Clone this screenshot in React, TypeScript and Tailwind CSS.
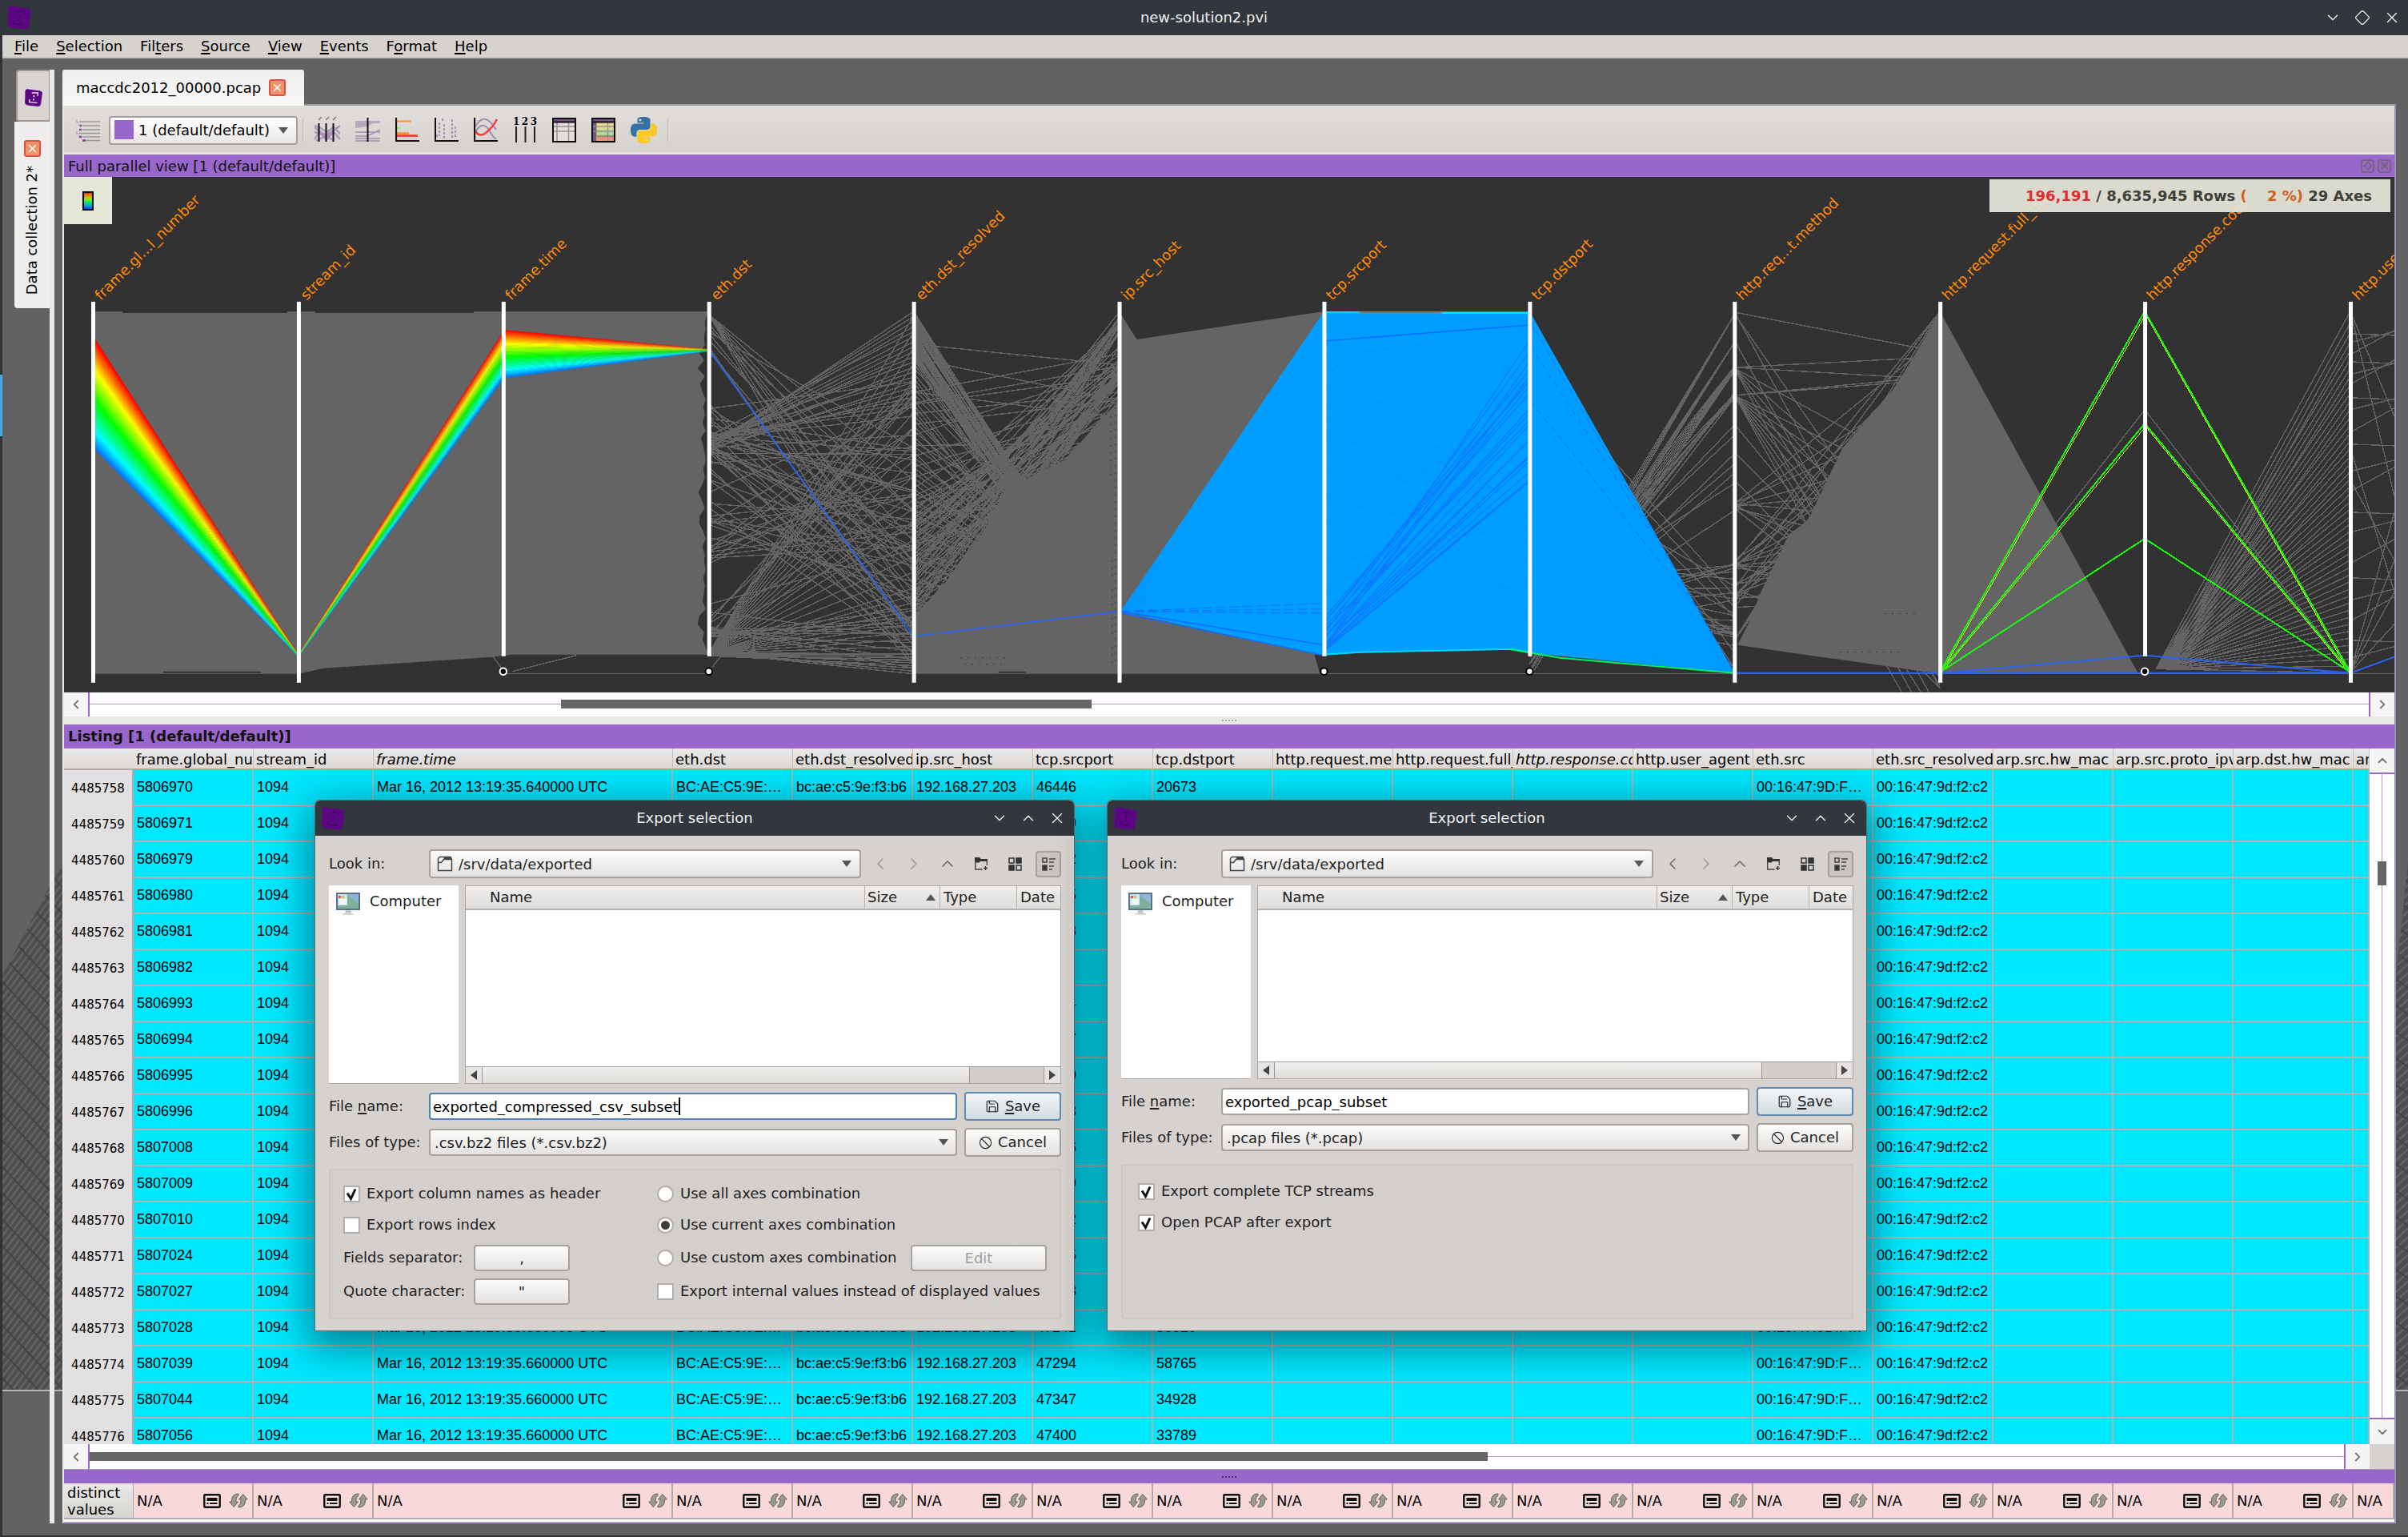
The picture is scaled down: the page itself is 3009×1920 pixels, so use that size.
import React from "react";
import { ChevronDown, ChevronLeft, ChevronRight, ChevronUp, Diamond, X, Save as SaveIcon, Ban } from "lucide-react";

/* ------------------------------------------------------------------ */
/* Shared pieces                                                       */
/* ------------------------------------------------------------------ */

function Logo({ className, mark = "#b98ad0" }: { className: string; mark?: string }) {
  return (
    <svg viewBox="0 0 32 32" className={className} aria-hidden="true">
      <path d="M5 1.500 L27 4.500 Q31 5.500 30.500 9 L28 27 Q27 31 23 30.500 L6 28.500 Q1.500 28 1.500 24 L2 5 Q2.500 1.500 5 1.500Z" fill="#5d0683" />
      <g fill="none" stroke={mark} strokeWidth="2">
        <path d="M13 8h10v5M23 8l-1.500 0" />
        <path d="M9 19v4.500l13 1" />
        <path d="M16.500 12v3M16 17.500v3" />
      </g>
    </svg>
  );
}

function CloseBadge({ label }: { label: string }) {
  return (
    <button aria-label={label} className="flex size-[21px] items-center justify-center rounded-[3px] border-2 border-[#dd4f4a] bg-[#ee9468] text-white">
      <X size={15} strokeWidth={2.500} />
    </button>
  );
}

/* ------------------------------------------------------------------ */
/* Menu                                                                */
/* ------------------------------------------------------------------ */

const menu: [string, string, string][] = [
  ["", "F", "ile"],
  ["", "S", "election"],
  ["Fil", "t", "ers"],
  ["", "S", "ource"],
  ["", "V", "iew"],
  ["", "E", "vents"],
  ["F", "o", "rmat"],
  ["", "H", "elp"],
];

function TitleBar() {
  return (
    <header className="grid h-11 shrink-0 grid-cols-[1fr_auto_1fr] items-center bg-[#32373e] text-[#eff0f1]">
      <Logo className="ml-2 size-8" mark="#46086a" />
      <h1 className="text-[18px] leading-6">new-solution2.pvi</h1>
      <div className="flex justify-end gap-4 pr-[9px]">
        <button aria-label="Minimize"><ChevronDown size={22} strokeWidth={1.500} /></button>
        <button aria-label="Restore"><Diamond size={20} strokeWidth={1.500} /></button>
        <button aria-label="Close"><X size={22} strokeWidth={1.500} /></button>
      </div>
    </header>
  );
}

function MenuBar() {
  return (
    <nav className="flex h-[29px] shrink-0 items-center border-b-2 border-[#c6c3bf] bg-[#d6d3cf] pl-1 text-black">
      {menu.map(([a, b, c]) => (
        <button key={a + b + c} className="px-[11px] leading-6">
          {a}
          <span className="underline decoration-2 underline-offset-2">{b}</span>
          {c}
        </button>
      ))}
    </nav>
  );
}

/* ------------------------------------------------------------------ */
/* Toolbar icons                                                       */
/* ------------------------------------------------------------------ */

function TreeIcon() {
  return (
    <svg width="30" height="28" viewBox="0 0 30 28">
      <path d="M4 3H30M8 8H30M8 13H30M4 17.500H30M8 22H30M12 26.500H30" stroke="#99989a" strokeWidth="1.500" />
      <path d="M1 1v3h2M4 6v2h2M1 15v3h2M4 20v2h2" stroke="#a898b0" strokeWidth="1.200" fill="none" />
      <path d="M4 13h3M8 26.500h4M4 22h3M5 8h2" stroke="#8b3f9a" strokeWidth="2.500" />
    </svg>
  );
}

function ParallelIcon() {
  return (
    <svg width="32" height="33" viewBox="0 0 32 33">
      <g stroke="#a689b4" fill="none" strokeWidth="2.500" opacity=".8">
        <path d="M0 11l6 2 9 6 9-6 8 8M0 28l6-9 9 9 9-9 8 9M0 19l14 3 10-5 8-6M0 13l15 12 9-5M2 30l12-6 10 5" />
      </g>
      <path d="M6 20h18l-9 10z" fill="#a689b4" opacity=".7" />
      <path d="M5.500 8v23M14.500 8v23M23.500 8v23" stroke="#111" strokeWidth="2" />
      <path d="M5 4l4-4M14 4l4-4M23 4l4-4" stroke="#777" strokeWidth="1.500" />
    </svg>
  );
}

function ZoomedIcon() {
  return (
    <svg width="31" height="33" viewBox="0 0 31 33">
      <path d="M0 5h31v3H22L15 12 0 14z" fill="#b09bbb" opacity=".8" />
      <path d="M0 19h31M0 24h15l16-8M0 27h31M0 30h31" stroke="#a790b3" strokeWidth="1.600" fill="none" />
      <path d="M15.500 1v30" stroke="#111" strokeWidth="2" />
    </svg>
  );
}

function HistogramIcon() {
  return (
    <svg width="30" height="33" viewBox="0 0 30 33">
      <path d="M2 5.500h18" stroke="#ff9020" strokeWidth="2" />
      <path d="M1 5v8h6l-3 2H1v5" fill="#7dff2a" />
      <path d="M2 20.500h15" stroke="#ff9020" strokeWidth="2.500" />
      <path d="M2 23.500h26" stroke="#ff2a2a" strokeWidth="2.500" />
      <path d="M1 1v29h29" fill="none" stroke="#111" strokeWidth="2.200" />
    </svg>
  );
}

function ScatterIcon() {
  return (
    <svg width="30" height="33" viewBox="0 0 30 33">
      <g stroke="#a48bb2" strokeWidth="1.800" fill="none" strokeDasharray="3 2">
        <path d="M3 22v5M6 7v17M12 9v18M22 3v24M26 12v15M10 2v3" />
      </g>
      <path d="M1 1v29h29" fill="none" stroke="#111" strokeWidth="2" />
    </svg>
  );
}

function SeriesIcon() {
  return (
    <svg width="30" height="33" viewBox="0 0 30 33">
      <g fill="none" strokeWidth="2">
        <path d="M2 12C10-2 18 0 28 16" stroke="#a689b4" />
        <path d="M2 20C8 6 16 10 20 18s6 9 8 9" stroke="#a689b4" />
        <path d="M2 18c3 5 8 6 13 2S25 11 29 3" stroke="#fb3b3b" strokeWidth="2.500" />
        <path d="M1 1v29h29" stroke="#111" strokeWidth="2.200" />
      </g>
    </svg>
  );
}

function AxesIcon() {
  return (
    <span className="flex w-[30px] flex-col">
      <span className="flex justify-between font-['DejaVu_Serif'] text-[12px] leading-[11px] font-bold text-black">
        <span>1</span><span>2</span><span>3</span>
      </span>
      <svg width="30" height="20" viewBox="0 0 30 20">
        <path d="M4 0v20M15.500 0v20M27 0v20" stroke="#222" strokeWidth="2" />
      </svg>
    </span>
  );
}

function GridIcon({ colored }: { colored?: boolean }) {
  return (
    <svg width="30" height="31" viewBox="0 0 30 31">
      <path d="M1 1h28v29H1z" fill="#e2dfde" />
      {colored && (
        <>
          <path d="M5 5h24v10H5z" fill="#e3d694" />
          <path d="M5 15h24v8H5z" fill="#aedb93" />
          <path d="M5 23h24v7H5z" fill="#e89080" />
          <path d="M1 1h4v29H1z" fill="#7d5290" />
        </>
      )}
      <path d="M1 1h28v4H1z" fill="#7d5290" />
      <path d="M6 5v25M20.500 5v25M1 11h28M1 17h28" stroke="#98938f" strokeWidth="1.500" />
      {colored && <path d="M1 23h28M5.500 5v25" stroke="#6b6566" strokeWidth="1" />}
      <path d="M1 5.500h28M1 1h28v29H1z" fill="none" stroke="#0d0d0d" strokeWidth="2" />
    </svg>
  );
}

function PythonIcon() {
  return (
    <svg width="33" height="33" viewBox="0 0 24 24">
      <path fill="#3673a5" d="M14.250.18l.9.2.73.26.59.3.45.32.34.34.25.34.16.33.1.3.04.26.02.2-.01.13V8.500l-.05.63-.13.55-.21.46-.26.38-.3.31-.33.25-.35.19-.35.14-.33.1-.3.07-.26.04-.21.02H8.770l-.69.05-.59.14-.5.22-.41.27-.33.32-.27.35-.2.36-.15.37-.1.35-.07.32-.04.27-.02.21v3.060H3.170l-.21-.03-.28-.07-.32-.12-.35-.18-.36-.26-.36-.36-.35-.46-.32-.59-.28-.73-.21-.88-.14-1.050-.05-1.230.06-1.220.16-1.040.24-.87.32-.71.36-.57.4-.44.42-.33.42-.24.4-.16.36-.1.32-.05.24-.01h.16l.06.01h8.160v-.83H6.180l-.01-2.750-.02-.37.05-.34.11-.31.17-.28.25-.26.31-.23.38-.2.44-.18.51-.15.58-.12.64-.1.71-.06.77-.04.84-.02 1.270.05zm-6.300 1.980l-.23.33-.08.41.08.41.23.34.33.22.41.09.41-.09.33-.22.23-.34.08-.41-.08-.41-.23-.33-.33-.22-.41-.09-.41.09z" />
      <path fill="#fbc926" d="M21.040 6.110l.28.06.32.12.35.18.36.27.36.35.35.47.32.59.28.73.21.88.14 1.040.05 1.230-.06 1.230-.16 1.040-.24.86-.32.71-.36.57-.4.45-.42.33-.42.24-.4.16-.36.09-.32.05-.24.02-.16-.01h-8.220v.82h5.840l.01 2.760.02.36-.05.34-.11.31-.17.29-.25.25-.31.24-.38.2-.44.17-.51.15-.58.13-.64.09-.71.07-.77.04-.84.01-1.270-.04-1.070-.14-.9-.2-.73-.25-.59-.3-.45-.33-.34-.34-.25-.34-.16-.33-.1-.3-.04-.25-.02-.2.01-.13v-5.340l.05-.64.13-.54.21-.46.26-.38.3-.32.33-.24.35-.2.35-.14.33-.1.3-.06.26-.04.21-.02.13-.01h5.840l.69-.05.59-.14.5-.21.41-.28.33-.32.27-.35.2-.36.15-.36.1-.35.07-.32.04-.28.02-.21V6.070h2.090l.14.01zm-6.470 14.250l-.23.33-.08.41.08.41.23.33.33.23.41.08.41-.08.33-.23.23-.33.08-.41-.08-.41-.23-.33-.33-.23-.41-.08-.41.08z" />
    </svg>
  );
}

const tools: [string, React.ReactNode][] = [
  ["Parallel view", <ParallelIcon />],
  ["Zoomed parallel view", <ZoomedIcon />],
  ["Histogram view", <HistogramIcon />],
  ["Scatter view", <ScatterIcon />],
  ["Series view", <SeriesIcon />],
  ["Axes combination", <AxesIcon />],
  ["Listing", <GridIcon />],
  ["Layered listing", <GridIcon colored />],
  ["Python console", <PythonIcon />],
];

function Toolbar() {
  return (
    <div className="flex h-[61px] shrink-0 items-center border-b-[3px] border-[#e9e6e8] bg-linear-to-b from-[#e1dedc] to-[#d5d2ce] pt-[3px] pl-[15px]">
      <button aria-label="Layers tree"><TreeIcon /></button>
      <label className="relative ml-[11px] block">
        <span className="pointer-events-none absolute top-[5px] left-[7px] size-6 bg-[#9966cc]" />
        <select aria-label="Layer" className="h-9 w-[236px] appearance-none rounded-[4px] border-2 border-[#a5a19e] bg-linear-to-b from-white to-[#e9e7e5] pl-[35px] text-black">
          <option>1 (default/default)</option>
        </select>
        <span className="pointer-events-none absolute top-[14px] right-[12px] border-x-[6px] border-t-[8px] border-x-transparent border-t-[#555]" />
      </label>
      <span className="ml-[6px] h-7 w-px bg-[#bfbbb8]" />
      <div className="ml-[14px] flex items-center gap-[19px]">
        {tools.map(([name, icon]) => (
          <button key={name} aria-label={name}>{icon}</button>
        ))}
      </div>
      <span className="ml-[13px] h-7 w-px bg-[#bfbbb8]" />
    </div>
  );
}

/* ------------------------------------------------------------------ */
/* Parallel coordinates view                                           */
/* ------------------------------------------------------------------ */

const TOP = 389;
const FLOOR = 842;
const axes = [
  "frame.gl...l_number",
  "stream_id",
  "frame.time",
  "eth.dst",
  "eth.dst_resolved",
  "ip.src_host",
  "tcp.srcport",
  "tcp.dstport",
  "http.req...t.method",
  "http.request.full_uri",
  "http.response.code",
  "http.user_agent",
].map((name, i) => ({ name, x: Math.round(116 + 256.500 * i), short: [2, 3, 6, 7, 10].includes(i) }));
const ax = (i: number) => axes[i].x;

function makeRandom(seed: number) {
  let s = seed;
  return () => {
    s = (s * 1664525 + 1013904223) % 4294967296;
    return s / 4294967296;
  };
}
const rnd = makeRandom(20120316);
const span = (a: number, b: number) => a + (b - a) * rnd();

type Pair = [number, number];
const strokes = (i: number, pairs: Pair[]) =>
  pairs.map(([a, b]) => `M${ax(i)} ${a.toFixed(1)}L${ax(i + 1)} ${b.toFixed(1)}`).join("");
const many = (n: number, f: (k: number) => Pair): Pair[] => Array.from({ length: n }, (_, k) => f(k / (n - 1)));

const greyEthDst = strokes(3, [
  ...many(20, (t) => [555 + span(-12, 8), TOP + t * 120]),
  ...many(14, (t) => [555 + span(-8, 12), 520 + t * 310]),
  ...many(7, (t) => [TOP + 4, 600 + t * 230]),
  ...many(5, (t) => [span(404, 440), span(700, 830)]),
  ...many(18, (t) => [816, 395 + t * 340]),
  ...many(12, (t) => [816, 735 + t * 100]),
  ...many(8, (t) => [790 + span(-8, 8), 760 + t * 75]),
  ...many(52, () => [span(500, 800), span(470, 830)]),
  ...many(8, (t) => [span(815, 820), 818 + t * 24]),
  [415, 560],
  [411, 640],
]);

const greyEthResolved = strokes(4, [
  ...many(46, (t) => [TOP + t * 60, 800 + span(-20, 42)]),
  ...many(56, (t) => [440 + t * 360, 740 + span(-40, 100)]),
  ...many(50, (t) => [640 + t * 200, TOP + span(0, 90)]),
  ...many(44, (t) => [620 + t * 220, span(450, 640)]),
  ...many(10, (t) => [490 + t * 120, span(440, 580)]),
  [430, 456],
  [448, 500],
  [490, 442],
  [505, 470],
]);

const greyMethodLeft = strokes(7, [
  ...many(4, (t) => [812 + t * 26, TOP + 4]),
  ...many(4, (t) => [812 + t * 26, 428]),
  ...many(7, (t) => [780 + t * 60, 458 + t * 6]),
  ...many(9, (t) => [760 + t * 70, 494 + span(-4, 4)]),
  ...many(7, () => [span(740, 830), span(530, 640)]),
  ...many(9, () => [span(440, 640), span(720, 838)]),
  ...many(22, () => [span(690, 800), span(700, 810)]),
]);

const greyMethodRight = strokes(8, [
  [TOP + 1, 440],
  [TOP + 1, 860],
  [TOP + 3, 760],
  [425, 890],
  [459, 446],
  [459, 474],
  [494, 474],
  [494, 470],
  ...many(5, (t) => [460, 600 + t * 330]),
  ...many(8, (t) => [494, 620 + t * 330]),
  [530, 840],
  [565, 820],
  [600, 860],
  ...many(10, (t) => [632 + span(-3, 3), 420 + t * 420]),
  ...many(12, (t) => [705 + span(-6, 6), TOP + t * 400]),
  ...many(14, (t) => [740 + span(-12, 20), TOP + t * 420]),
  ...many(10, (t) => [800, TOP + t * 60]),
]);

const greyAgentLeft = many(48, (t) => [0, TOP + Math.pow(t, 0.900) * 452] as Pair)
  .map(([, b], k) => `M${ax(10) + 14 + (k % 4) * 4} ${FLOOR - 6}L${ax(11)} ${b.toFixed(1)}`)
  .join("");

const greyAgentRight = [417, 428, 443, 452, 468, 480, 497, 512, 540, 555, 589, 614, 640, 665, 704, 722, 750, 776, 800, 822]
  .map((y, k) => `M${ax(11)} ${y}L2993 ${y + (k % 3 === 0 ? 2 : k % 3 === 1 ? -14 : -30)}`)
  .concat([`M${ax(11)} ${TOP}L2993 520M${ax(11)} ${TOP}L2993 620M${ax(11)} 560L2993 740M${ax(11)} 600L2993 700M${ax(11)} 840L2993 640M${ax(11)} 840L2993 700M${ax(11)} 840L2993 740M${ax(11)} 840L2993 780`])
  .join("");

const blueBundle = many(22, (t) => [814 - span(0, 60) * (1 - t), 430 + t * 175 + span(-8, 8)]);
const blueShade = many(60, () => [span(400, 810), span(400, 808)]);

function Fan({ ax0, a, b, ax1, c, d }: { ax0: number; a: number; b: number; ax1: number; c: number; d: number }) {
  const n = 44;
  return (
    <g>
      {Array.from({ length: n }, (_, k) => {
        const at = (lo: number, hi: number, t: number) => (lo + (hi - lo) * t).toFixed(1);
        const t0 = k / n;
        const t1 = (k + 1.300) / n;
        return (
          <path
            key={k}
            fill={`hsl(${Math.round(t0 * 216)} 100% 50%)`}
            d={`M${ax0} ${at(a, b, t0)}L${ax1} ${at(c, d, t0)}V${at(c, d, t1)}L${ax0} ${at(a, b, t1)}Z`}
          />
        );
      })}
    </g>
  );
}

const teeth = [0, 3, 2, 4, 3, 10, 4, 12, 3, 9, 6, 2, 5, 3, 6, 2, 8, 5, 3, 2, 5, 3, 6, 11, 7, 3, 9, 10, 5, 2, 6, 3, 4, 2, 5, 3, 4, 6, 2, 10, 12, 4, 6, 2];
const jag = teeth.map((w, k) => `L${884 - w} ${Math.round(392 + k * 9.700)}`).join("");

function ParallelPlot() {
  const grey = "#646464";
  return (
    <svg viewBox="80 221 2913 644" className="block w-full" role="img" aria-label="Parallel coordinates">
      <rect x="80" y="221" width="2913" height="644" fill="#323232" />

      {/* unselected events */}
      <g fill={grey}>
        <path d={`M117 ${TOP}H886V818H640L615 821 525 827 405 835 373 ${FLOOR}H117Z`} />
        <path d={`M1142 ${FLOOR}V770L1190 720 1235 655 1262 598 1276 602 1330 575 1399 500V${FLOOR}Z`} />
        <path d={`M1399 ${TOP}L1421 424 1500 412 1655 ${TOP}V818H1643L1650 ${FLOOR}H1399Z`} />
        <path d={`M2425 ${TOP}L2673 ${FLOOR}H2425L2172 806 2190 770 2200 742 2236 668 2260 650 2303 560 2372 480Z`} />
      </g>
      <path d={`M886 390${jag}L886 818Z`} fill="#323232" />
      <g fill="none" stroke={grey} strokeWidth="1.400" shapeRendering="crispEdges">
        <path d={greyEthDst} />
        <path d={greyEthResolved} />
        <path d={greyMethodLeft} />
        <path d={greyMethodRight} />
        <path d={greyAgentLeft} />
        <path d={greyAgentRight} />
        <path d={`M616 820L629 838M720 819L640 839M630 ${FLOOR}H886M890 834L902 819M1650 ${FLOOR}H2425M2681 ${FLOOR}H2993M1917 838L1930 818M2673 ${FLOOR}H2690`} />
        <path d="M2425 840L2681 512 2938 840" />
      </g>
      <g fill="#323232">
        <path d="M153 389h206v2H153zM394 389h198v2H394zM204 839h122v2H204zM1248 839h34v2h-34z" />
      </g>
      <g stroke="#3a3a3a" strokeWidth="1" fill="none" strokeDasharray="2 7" shapeRendering="crispEdges">
        <path d="M1146 660V740M1152 670V752M1160 680V720M1170 650V740M1182 640V712M1196 660V700M1210 640V690M1226 610V660" />
        <path d="M1394 500V830M1388 520V600M1390 700V830M1200 822h60M1205 830h50" />
        <path d="M2356 767h40M2300 815h80" />
      </g>

      {/* time-ordered gradient */}
      <Fan ax0={118} a={422} b={560} ax1={373} c={818} d={821} />
      <Fan ax0={373} a={818} b={821} ax1={630} c={412} d={472} />
      <Fan ax0={630} a={412} b={472} ax1={886} c={436} d={439} />

      {/* selected ports */}
      <g fill="#009fff">
        <path d="M1401 764L1655 389V819Z" />
        <path d="M1655 389H1912V815L1890 811 1690 816 1655 819Z" />
        <path d="M1912 389L2168 841 1912 816Z" />
      </g>
      <g fill="none" stroke="#0098ff" strokeWidth="1">
        <path d={strokes(6, blueShade)} />
        <path d={`${many(30, (t) => [0, 400 + t * 410]).map(([, y]) => `M1401 764L1655 ${y}`).join("")}${many(24, (t) => [0, 400 + t * 410]).map(([, y]) => `M1912 ${y}L2168 841`).join("")}`} />
      </g>
      <g fill="none" stroke="#0f6cff" strokeWidth="1">
        <path d={strokes(6, blueBundle)} strokeWidth="1.300" opacity=".7" />
        <path d="M1655 426L1912 406" strokeWidth="1.500" />
        <path d="M1401 764L1655 754M1401 764L1655 761M1401 764L1655 766" strokeDasharray="12 5" />
        <path d="M1401 764L1655 806M1401 766L1655 819" strokeWidth="1.500" />
        <path d="M1912 400L2168 840M1912 500L2130 770M1912 430L2060 660" strokeDasharray="8 6" />
        <path d="M886 437L1142 795 1399 764" stroke="#2a62f0" strokeWidth="1.800" />
        <path d="M2168 841H2938M2425 841L2681 819 2938 841 2993 821" stroke="#2a62f0" strokeWidth="2" />
      </g>
      <g fill="none" strokeWidth="2">
        <path d="M1655 390H1700M1802 391H1912" stroke="#00e0ff" />
        <path d="M1700 391H1802" stroke="#5b8fa0" />
        <path d="M1655 818L1700 815 1890 811 1912 815" stroke="#00d8ff" />
        <path d="M1885 811L1950 822 2168 841" stroke="#00f060" />
      </g>
      <g fill="none" stroke="#e0f020" strokeWidth="1" shapeRendering="crispEdges">
        <path d="M2427 840L2682 393 2936 840M2427 840L2682 533 2936 840" />
      </g>
      <g fill="none" stroke="#18f80c" strokeWidth="2" shapeRendering="crispEdges">
        <path d="M2425 840L2681 389 2938 840M2425 840L2681 529 2938 840M2425 840L2681 673 2938 840" />
      </g>

      {/* axes */}
      <g fill="#fff">
        {axes.map((a) => (
          <rect key={a.name} x={a.x - 2} y="377" width="5" height={a.short ? 443 : 476} />
        ))}
      </g>
      {axes.filter((a) => a.short).map((a) => (
        <circle key={a.name} cx={a.x} cy="839" r="4.200" fill={[2, 10].includes(axes.indexOf(a)) ? "#000" : "#fff"} stroke={[2, 10].includes(axes.indexOf(a)) ? "#fff" : "#000"} strokeWidth="2" />
      ))}
      <g fill="#ff8a0d" fontSize="18" fontFamily="DejaVu Sans, sans-serif">
        {axes.map((a) => (
          <text key={a.name} transform={`translate(${a.x + 10} 376) rotate(-45)`}>{a.name}</text>
        ))}
      </g>
    </svg>
  );
}

function PanelTitle({ children, className }: { children: React.ReactNode; className: string }) {
  return <div className={"flex shrink-0 items-center bg-[#9966cc] pl-[5px] text-[#111] " + className}>{children}</div>;
}

function ParallelView() {
  return (
    <section>
      <PanelTitle className="h-7 justify-between pr-1">
        <h2>Full parallel view [1 (default/default)]</h2>
        <span className="flex gap-1 text-[#74667e]">
          <button aria-label="Float" className="flex size-[17px] items-center justify-center rounded-[4px] border-2"><Diamond size={10} strokeWidth={4} /></button>
          <button aria-label="Close view" className="flex size-[17px] items-center justify-center rounded-[4px] border-2"><X size={14} strokeWidth={5} /></button>
        </span>
      </PanelTitle>
      <div className="relative">
        <ParallelPlot />
        <button aria-label="Colors" className="absolute top-0 left-0 flex h-[59px] w-[60px] items-center justify-center bg-[#e4e6d8]">
          <span className="h-6 w-[14px] border-2 border-black bg-linear-to-b from-[#ff2000] via-[#20ff20] to-[#0040ff]" />
        </button>
        <p className="absolute top-[3px] right-[5px] flex h-[41px] w-[501px] items-center justify-end bg-[#e4e5d7]/95 pr-[23px] font-bold whitespace-pre text-[#40403a]">
          <span className="text-[#e02b30]">196,191</span> / 8,635,945 Rows <span className="text-[#d2601e]">{"(    2 %)"}</span> 29 Axes
        </p>
      </div>
      <HScroll left={589} thumb={663} className="h-[30px]" />
      <div className="flex h-[10px] items-center justify-center bg-[#e8e8e5] text-[#aaa]"><Dots /></div>
    </section>
  );
}

function Dots() {
  return (
    <span className="flex gap-[2px]">
      {[0, 1, 2, 3, 4].map((k) => <span key={k} className="size-[2px] bg-current" />)}
    </span>
  );
}

function HScroll({ left, thumb, className }: { left: number; thumb: number; className: string }) {
  return (
    <div className={"flex min-w-0 flex-1 bg-white text-[#777] " + className}>
      <button aria-label="Scroll left" className="flex w-8 items-center justify-center border-r-2 border-[#9966cc] bg-[#f6f5f6]"><ChevronLeft size={18} strokeWidth={2.500} /></button>
      <div className="flex flex-1 items-center">
        <span className="h-px bg-[#c08fc8]" style={{ width: left }} />
        <span className="h-[11px] bg-[#666]" style={{ width: thumb }} />
        <span className="h-px flex-1 bg-[#c08fc8]" />
      </div>
      <button aria-label="Scroll right" className="flex w-8 items-center justify-center border-l-2 border-[#9966cc] bg-[#f6f5f6]"><ChevronRight size={18} strokeWidth={2.500} /></button>
    </div>
  );
}

/* ------------------------------------------------------------------ */
/* Listing                                                             */
/* ------------------------------------------------------------------ */

const columns = [
  "frame.global_number", "stream_id", "frame.time", "eth.dst", "eth.dst_resolved", "ip.src_host", "tcp.srcport", "tcp.dstport",
  "http.request.method", "http.request.full_uri", "http.response.code", "http.user_agent", "eth.src", "eth.src_resolved",
  "arp.src.hw_mac", "arp.src.proto_ipv4", "arp.dst.hw_mac", "arp.dst.proto_ipv4",
];
const frames = [
  5806970, 5806971, 5806979, 5806980, 5806981, 5806982, 5806993, 5806994, 5806995, 5806996, 5807008, 5807009, 5807010,
  5807024, 5807027, 5807028, 5807039, 5807044, 5807056,
];
const dstPorts: Record<number, string> = { 0: "20673", 15: "35829", 16: "58765", 17: "34928", 18: "33789" };

function Columns() {
  return (
    <colgroup>
      <col className="w-[87px]" />
      {columns.map((c, i) => (
        <col key={c} className={i === 2 ? "w-[374px]" : i === 17 ? "" : "w-[150px]"} />
      ))}
    </colgroup>
  );
}

function Listing() {
  return (
    <section className="flex min-h-0 flex-1 flex-col">
      <PanelTitle className="h-[30px] pb-px font-bold"><h2>Listing [1 (default/default)]</h2></PanelTitle>
      <div className="flex min-h-0 flex-1">
        <div className="min-w-0 flex-1 overflow-hidden bg-[#e1dfe0]">
          <table className="w-full table-fixed border-separate border-spacing-0 text-left text-black">
            <Columns />
            <thead>
              <tr className="h-[27px] bg-linear-to-b from-[#ebe9e8] to-[#dbd8d5]">
                <td className="border-b-2 border-[#b8a9a4]" />
                {columns.map((c, i) => (
                  <th key={c} className={"overflow-hidden border-r border-b-2 border-r-[#c4c1be] border-b-[#c8988c] p-0 pt-[2px] pl-[3px] font-normal whitespace-nowrap leading-[23px]" + (["frame.time", "http.response.code"].includes(c) ? " italic" : "")}>{c}</th>
                ))}
              </tr>
            </thead>
            <tbody>
              {frames.map((f, r) => {
                const cells = [
                  String(f), "1094", `Mar 16, 2012 13:19:35.${r < 6 ? "640000" : "660000"} UTC`, "BC:AE:C5:9E:…", "bc:ae:c5:9e:f3:b6",
                  "192.168.27.203", String(46446 + 53 * r), dstPorts[r] ?? "", "", "", "", "", "00:16:47:9D:F…", "00:16:47:9d:f2:c2", "", "", "", "",
                ];
                return (
                  <tr key={f} className="h-[45px] font-['Liberation_Sans',Arial,sans-serif]">
                    <th className="border-r-2 border-[#b7a9a9] p-0 pt-[2px] text-center font-['DejaVu_Sans',sans-serif] text-[15px] leading-5 font-normal">{4485758 + r}</th>
                    {cells.map((v, i) => (
                      <td key={i} className="overflow-hidden border-r-2 border-b-2 border-r-[#a8b4b4] border-b-[#b3b3b3] bg-[#00e8ff] p-0 pl-1 whitespace-nowrap">{v}</td>
                    ))}
                  </tr>
                );
              })}
            </tbody>
          </table>
        </div>
        <div className="flex w-[31px] shrink-0 flex-col items-stretch bg-white text-[#777]">
          <button aria-label="Scroll up" className="flex h-8 items-center justify-center border-b-2 border-[#9966cc] bg-[#f6f5f6]"><ChevronUp size={18} strokeWidth={2.500} /></button>
          <div className="flex flex-1 flex-col items-center">
            <span className="h-[109px] w-px bg-[#c08fc8]" />
            <span className="h-[30px] w-[11px] bg-[#666]" />
            <span className="w-px flex-1 bg-[#c08fc8]" />
          </div>
          <button aria-label="Scroll down" className="flex h-[33px] items-center justify-center border-t-2 border-[#9966cc] bg-[#f6f5f6]"><ChevronDown size={18} strokeWidth={2.500} /></button>
        </div>
      </div>
      <div className="flex h-8 shrink-0 border-b border-[#a39aa6]">
        <HScroll left={0} thumb={1747} className="h-[31px]" />
        <span className="w-[31px] bg-[#d6d3d0]" />
      </div>
      <div className="flex h-[17px] shrink-0 items-center justify-center bg-[#9966cc] text-[#4a3068]">
        <Dots />
      </div>
      <table className="w-full shrink-0 table-fixed border-separate border-spacing-0 border-b-[3px] border-white text-left text-black">
        <Columns />
        <tbody>
          <tr className="h-[45px]">
            <th className="border-r border-b-2 border-[#aaa] bg-linear-to-b from-[#eceae8] to-[#d6d4d0] p-0 pl-1 leading-[21px] font-normal">distinct values</th>
            {columns.map((c, i) => (
              <td key={c} className="overflow-hidden border-r-2 border-b-2 border-[#b3aaaa] bg-[#f8d8d8] p-0">
                <div className={"flex items-center pl-1 " + (i === 17 ? "" : "pr-[5px]")}>
                  <span className="flex-1 leading-6">N/A</span>
                  {i < 17 && (
                    <>
                      <button aria-label={`List values of ${c}`} className="mr-[10px]">
                        <svg width="22" height="18" viewBox="0 0 22 18">
                          <rect x="1.300" y="1.300" width="19.400" height="15.400" rx="1" fill="#f8e4e4" stroke="#111" strokeWidth="2.400" />
                          <path d="M4.500 5h13v4h-13z" fill="#111" />
                          <path d="M4.500 12h2M8 12h9.500" stroke="#111" strokeWidth="2.200" />
                        </svg>
                      </button>
                      <button aria-label={`Refresh ${c}`}>
                        <svg width="24" height="19" viewBox="0 0 24 19">
                          <g fill="#9a9c92" stroke="#62635e" strokeWidth="1">
                            <path d="M12 1Q3 1 3.500 11H.8L6.300 17.500 11.500 11H8.800Q8.500 5 12 3Z" />
                            <path d="M12 18Q21 18 20.500 8h2.700L17.700 1.500 12.500 8h2.700Q15.500 14 12 16Z" />
                          </g>
                        </svg>
                      </button>
                    </>
                  )}
                </div>
              </td>
            ))}
          </tr>
        </tbody>
      </table>
    </section>
  );
}

/* ------------------------------------------------------------------ */
/* Export dialogs                                                      */
/* ------------------------------------------------------------------ */

const raised = "rounded-[4px] border-2 border-[#a5a19e] bg-linear-to-b from-[#fcfcfb] to-[#e4e2e0]";

function Arrow({ className }: { className: string }) {
  return <span className={"pointer-events-none absolute border-x-[6px] border-t-[8px] border-x-transparent border-t-[#555] " + className} />;
}

function Tick({ label, checked, kind = "checkbox", name }: { label: string; checked?: boolean; kind?: "checkbox" | "radio"; name?: string }) {
  return (
    <label className="flex items-center gap-2">
      <span className="relative block size-[21px]">
        <input
          type={kind}
          name={name}
          defaultChecked={checked}
          className={"peer block size-[21px] appearance-none border-2 border-[#b1adaa] bg-white " + (kind === "radio" ? "rounded-full" : "")}
        />
        {kind === "radio" ? (
          <span className="pointer-events-none absolute inset-[5px] hidden rounded-full bg-[#3c3c3c] peer-checked:block" />
        ) : (
          <svg viewBox="0 0 21 21" className="pointer-events-none absolute inset-0 hidden peer-checked:block">
            <path d="M5 9.500L9.500 16.500 15 4.500" fill="none" stroke="#111" strokeWidth="3" />
          </svg>
        )}
      </span>
      <span className="leading-6 whitespace-nowrap">{label}</span>
    </label>
  );
}

function FolderIcon() {
  return (
    <svg width="20" height="20" viewBox="0 0 20 20" className="pointer-events-none absolute top-[8px] left-[10px]">
      <path d="M1.500 18.500V3.500L3.500 1.500H17L18.500 4.500V18.500Z" fill="none" stroke="#444" strokeWidth="1.500" />
      <path d="M1.500 8.500H5.500L8.500 4.500H18.500" fill="none" stroke="#444" strokeWidth="1.500" />
      <path d="M9 1.500H17.500V4.500H8.500Z" fill="#444" />
    </svg>
  );
}

function ComputerIcon() {
  return (
    <svg width="32" height="30" viewBox="0 0 32 30">
      <rect x="1" y="1" width="30" height="22" fill="#59718a" />
      <path d="M3 3h26v18H3z" fill="#7fae9a" />
      <path d="M14 3h15v12z" fill="#8fb5d8" />
      <path d="M3 3h12v14H3z" fill="#cfe4ee" />
      <path d="M5 9h9v7H5z" fill="#eef8f0" />
      <path d="M4 5h3v3H4z" fill="#e05050" />
      <path d="M8 5h3v3H8z" fill="#e0c040" />
      <path d="M13 23h6l1 4h-8z" fill="#c8c8c8" />
      <path d="M9 27h14v2H9z" fill="#d8d8d8" />
    </svg>
  );
}

function NavIcons({ canGoBack }: { canGoBack?: boolean }) {
  return (
    <div className="flex items-center gap-[10px] text-[#4a4a4a]">
      <button aria-label="Back" className={"flex size-8 items-center justify-center " + (canGoBack ? "text-[#666]" : "text-[#999694]")}><ChevronLeft size={24} strokeWidth={1.500} /></button>
      <button aria-label="Forward" className="flex size-8 items-center justify-center text-[#999694]"><ChevronRight size={24} strokeWidth={1.500} /></button>
      <button aria-label="Parent folder" className="flex size-8 items-center justify-center text-[#666]"><ChevronUp size={24} strokeWidth={1.500} /></button>
      <button aria-label="New folder" className="flex size-8 items-center justify-center">
        <svg width="18" height="18" viewBox="0 0 18 18">
          <path d="M1 1h6l1.500 2H17v3H8L6.500 7.500H1z" fill="#333" />
          <path d="M1.700 6v10h9M16.300 5v6" fill="none" stroke="#444" strokeWidth="1.400" />
          <path d="M14.500 12v5M12 14.500h5" stroke="#333" strokeWidth="1.500" />
        </svg>
      </button>
      <button aria-label="List view" className="flex size-8 items-center justify-center">
        <svg width="17" height="17" viewBox="0 0 17 17" stroke="#333" strokeWidth="1.500">
          <path d="M1 1h6v6H1zM10 10h6v6h-6z" fill="none" />
          <path d="M10 1h6v6h-6zM1 10h6v6H1z" fill="#333" />
        </svg>
      </button>
      <button aria-label="Detail view" className="flex h-[33px] w-8 items-center justify-center rounded-[4px] border-2 border-[#a3a09d] bg-[#c8c5c3]">
        <svg width="17" height="17" viewBox="0 0 17 17" stroke="#444" strokeWidth="1.500">
          <path d="M1 1h5v5H1z" fill="none" />
          <path d="M1 10h5v6H1z" fill="#333" />
          <path d="M9 2h8M9 6h6M9 11h6M9 15h4" />
        </svg>
      </button>
    </div>
  );
}

interface DialogProps {
  id: string;
  className: string;
  fileName: string;
  fileType: string;
  focused?: boolean;
  paneClass: string;
  children: React.ReactNode;
}

function ExportDialog({ id, className, fileName, fileType, focused, paneClass, children }: DialogProps) {
  return (
    <section
      role="dialog"
      aria-labelledby={`${id}-title`}
      className={"absolute top-[1000px] flex h-[662px] w-[948px] flex-col rounded-t-[6px] bg-[#d6d2d0] text-[#222] shadow-[0_14px_50px_8px_rgba(0,30,40,0.5)] ring-1 ring-[#5d6b70] " + className}
    >
      <header className="grid h-11 shrink-0 grid-cols-[1fr_auto_1fr] items-center rounded-t-[6px] bg-[#32373e] text-[#eff0f1]">
        <Logo className="ml-[7px] size-[31px]" mark="#46086a" />
        <h2 id={`${id}-title`} className="leading-6">Export selection</h2>
        <div className="flex justify-end gap-[14px] pr-[10px]">
          <button aria-label="Minimize"><ChevronDown size={22} strokeWidth={1.500} /></button>
          <button aria-label="Maximize"><ChevronUp size={22} strokeWidth={1.500} /></button>
          <button aria-label="Close"><X size={22} strokeWidth={1.500} /></button>
        </div>
      </header>
      <div className="flex flex-1 flex-col pt-[17px] pr-4 pb-[14px] pl-[17px]">
        <div className="flex items-center">
          <label htmlFor={`${id}-dir`} className="w-[125px] leading-6">Look in:</label>
          <div className="relative mr-[8px] flex-1">
            <select id={`${id}-dir`} className={"h-9 w-full appearance-none pl-[35px] " + raised}>
              <option>/srv/data/exported</option>
            </select>
            <FolderIcon />
            <Arrow className="top-[14px] right-[12px]" />
          </div>
          <NavIcons canGoBack={!focused} />
        </div>

        <div className={"mt-[9px] flex gap-2 " + paneClass}>
          <div className="w-[162px] border-b border-[#aaa] bg-white pt-2 pl-2">
            <button className="flex items-start gap-[11px] leading-6"><ComputerIcon />Computer</button>
          </div>
          <div className="flex min-w-0 flex-1 flex-col border border-[#aaa6a3] bg-white">
            <table className="w-full table-fixed border-separate border-spacing-0 bg-linear-to-b from-[#f0efed] to-[#dddbd9] text-left">
              <thead>
                <tr className="h-[30px] leading-6">
                  <th className="border-r border-b-2 border-[#b5b1ae] p-0 pl-[30px] font-normal">Name</th>
                  <th className="w-[94px] border-r border-b-2 border-[#b5b1ae] p-0 font-normal">
                    <span className="flex items-center justify-between pr-[5px] pl-[3px]">
                      Size <span className="border-x-[6px] border-b-[8px] border-x-transparent border-b-[#555]" />
                    </span>
                  </th>
                  <th className="w-24 border-r border-b-2 border-[#b5b1ae] p-0 pl-1 font-normal">Type</th>
                  <th className="w-[54px] border-b-2 border-[#b5b1ae] p-0 pl-1 font-normal">Date</th>
                </tr>
              </thead>
            </table>
            <div className="mt-auto flex h-[21px] border-t border-[#9d9996] bg-[#d1cecb]">
              <button aria-label="Scroll left" className="flex w-[21px] items-center justify-center border-r border-[#9d9996] bg-[#e6e4e2]"><span className="border-y-[6px] border-r-[8px] border-y-transparent border-r-[#444]" /></button>
              <span className="flex-1 bg-linear-to-b from-[#f1f0ee] to-[#dfddda]" />
              <span className="w-[93px] border-l border-[#9d9996]" />
              <button aria-label="Scroll right" className="flex w-[21px] items-center justify-center border-l border-[#9d9996] bg-[#e6e4e2]"><span className="border-y-[6px] border-l-[8px] border-y-transparent border-l-[#444]" /></button>
            </div>
          </div>
        </div>

        <div className="mt-[10px] grid grid-cols-[125px_1fr_121px] items-center gap-y-[9px]">
          <label htmlFor={`${id}-name`} className="leading-6">File <span className="underline decoration-2 underline-offset-2">n</span>ame:</label>
          <div className="relative mr-[9px]">
            <input
              id={`${id}-name`}
              type="text"
              defaultValue={fileName}
              className={"block h-[34px] w-full rounded-[4px] border-2 bg-white pl-[3px] text-black " + (focused ? "border-[#4f80b3]" : "border-[#a5a19e]")}
            />
            {focused && <span className="absolute top-[6px] left-[312px] h-[22px] w-[2px] bg-black" />}
          </div>
          <button className="flex h-9 items-center justify-center gap-[7px] rounded-[4px] border-2 border-[#5f8bb4] bg-linear-to-b from-[#f4f6f7] to-[#d3dbe0] leading-6">
            <SaveIcon size={18} strokeWidth={1.600} />
            <span><span className="underline decoration-2 underline-offset-2">S</span>ave</span>
          </button>
          <label htmlFor={`${id}-type`} className="leading-6">Files of type:</label>
          <div className="relative mr-[9px]">
            <select id={`${id}-type`} className={"block h-[34px] w-full appearance-none pl-[5px] " + raised}>
              <option>{fileType}</option>
            </select>
            <Arrow className="top-[13px] right-[11px]" />
          </div>
          <button className={"flex h-9 items-center justify-center gap-[7px] leading-6 " + raised}>
            <Ban size={17} strokeWidth={1.600} />
            Cancel
          </button>
        </div>

        <div className="mt-[15px] flex-1 rounded-[3px] border-2 border-[#cbc7c5] bg-[#d2cfcd]">{children}</div>
      </div>
    </section>
  );
}

function CsvOptions() {
  return (
    <div className="flex pt-[17px] pl-4">
      <div className="flex w-[392px] flex-col">
        <div className="flex h-[39px] items-start"><Tick label="Export column names as header" checked /></div>
        <div className="flex h-8 items-start"><Tick label="Export rows index" /></div>
        <div className="flex h-[42px] items-center">
          <label htmlFor="sep" className="w-[163px] leading-6">Fields separator:</label>
          <button id="sep" className={"h-[33px] w-[120px] " + raised}>,</button>
        </div>
        <div className="flex h-[42px] items-center">
          <label htmlFor="quote" className="w-[163px] leading-6">Quote character:</label>
          <button id="quote" className={"h-[33px] w-[120px] " + raised}>"</button>
        </div>
      </div>
      <div className="flex flex-1 flex-col">
        <div className="flex h-[39px] items-start"><Tick kind="radio" name="axes" label="Use all axes combination" /></div>
        <div className="flex h-8 items-start"><Tick kind="radio" name="axes" label="Use current axes combination" checked /></div>
        <div className="flex h-[42px] items-center justify-between pr-4">
          <Tick kind="radio" name="axes" label="Use custom axes combination" />
          <button disabled className={"h-[33px] w-[170px] text-[#a3a09e] " + raised}>Edit</button>
        </div>
        <div className="flex h-[42px] items-center"><Tick label="Export internal values instead of displayed values" /></div>
      </div>
    </div>
  );
}

function PcapOptions() {
  return (
    <div className="flex flex-col gap-[15px] pt-5 pl-[19px]">
      <Tick label="Export complete TCP streams" checked />
      <Tick label="Open PCAP after export" checked />
    </div>
  );
}

/* ------------------------------------------------------------------ */
/* Page                                                                */
/* ------------------------------------------------------------------ */

function Hatch({ className, width }: { className: string; width: number }) {
  const d = Array.from({ length: 90 }, (_, k) => `M-10 ${k * 11 - 60}L${width} ${k * 11 - 60 - width * 1.500}`).join("");
  const e = Array.from({ length: 30 }, (_, k) => `M-10 ${k * 33 - 60}L${width} ${k * 33 - 60 + width * 1.200}`).join("");
  return (
    <svg className={"pointer-events-none absolute " + className} viewBox={`0 0 ${width} 660`} preserveAspectRatio="none">
      <path d={`M0 140L${width} 0V658H0Z`} fill="#4e4e4e" />
      <g clipPath={`url(#hatch-${width})`} fill="none">
        <path d={d} stroke="#626262" strokeWidth="2.500" />
        <path d={e} stroke="#444" strokeWidth="2" />
      </g>
      <clipPath id={`hatch-${width}`}><path d={`M0 140L${width} 0V658H0Z`} /></clipPath>
      <path d={`M0 659H${width}`} stroke="#b4b4b4" strokeWidth="2" />
    </svg>
  );
}

export default function App() {
  return (
    <div className="relative flex h-screen flex-col overflow-hidden bg-[#626262] font-['DejaVu_Sans',sans-serif] text-[18px]">
      <TitleBar />
      <div className="relative flex min-h-0 flex-1 flex-col border-b-2 border-l-[3px] border-[#2f3338]">
        <span className="absolute top-[424px] -left-[3px] h-[77px] w-[3px] bg-[#3daee9]" />
        <Hatch className="top-[1034px] left-0 h-[660px] w-[75px]" width={75} />
        <Hatch className="top-[1034px] right-0 h-[660px] w-[15px]" width={15} />
        <MenuBar />
        <div className="relative flex min-h-0 flex-1 pt-[14px] pr-[15px] pb-[15px]">
          <aside className="flex w-[65px] shrink-0 border-r-[6px] border-[#eceae8] pl-[15px]">
            <div className="flex flex-1 flex-col">
              <button aria-label="Home" className="ml-[2px] flex h-[65px] items-center justify-center rounded-l-[4px] border-2 border-r border-[#9b9896] bg-[#d8d5d3] pt-1">
                <Logo className="size-6" mark="#f0e4f5" />
              </button>
              <div className="flex h-[233px] flex-col items-center gap-[11px] rounded-bl-[4px] bg-[#efeeec] pt-[23px]">
                <CloseBadge label="Close data collection" />
                <button className="rotate-180 leading-6 text-black [writing-mode:vertical-rl]">Data collection 2*</button>
              </div>
            </div>
          </aside>
          <main className="ml-[10px] flex min-w-0 flex-1 flex-col">
            <div className="relative flex h-[43px] shrink-0">
              <div className="relative z-10 -mb-[2px] flex items-center gap-[10px] rounded-t-[3px] bg-linear-to-b from-[#f1efee] to-[#f8f8f7] pr-[23px] pl-[17px]">
                <button className="leading-6 text-black">maccdc2012_00000.pcap</button>
                <CloseBadge label="Close tab" />
              </div>
            </div>
            <div className="flex min-h-0 flex-1 flex-col border-t-2 border-r-2 border-b-2 border-l-2 border-t-[#979593] border-r-[#a08cb4] border-b-[#b79ad4] border-l-[#ebe8ee]">
              <Toolbar />
              <ParallelView />
              <Listing />
            </div>
          </main>
        </div>
      </div>

      <ExportDialog id="csv" className="left-[394px]" fileName="exported_compressed_csv_subset" fileType=".csv.bz2 files (*.csv.bz2)" focused paneClass="h-[248px]">
        <CsvOptions />
      </ExportDialog>
      <ExportDialog id="pcap" className="left-[1384px]" fileName="exported_pcap_subset" fileType=".pcap files (*.pcap)" paneClass="h-[242px]">
        <PcapOptions />
      </ExportDialog>
    </div>
  );
}
